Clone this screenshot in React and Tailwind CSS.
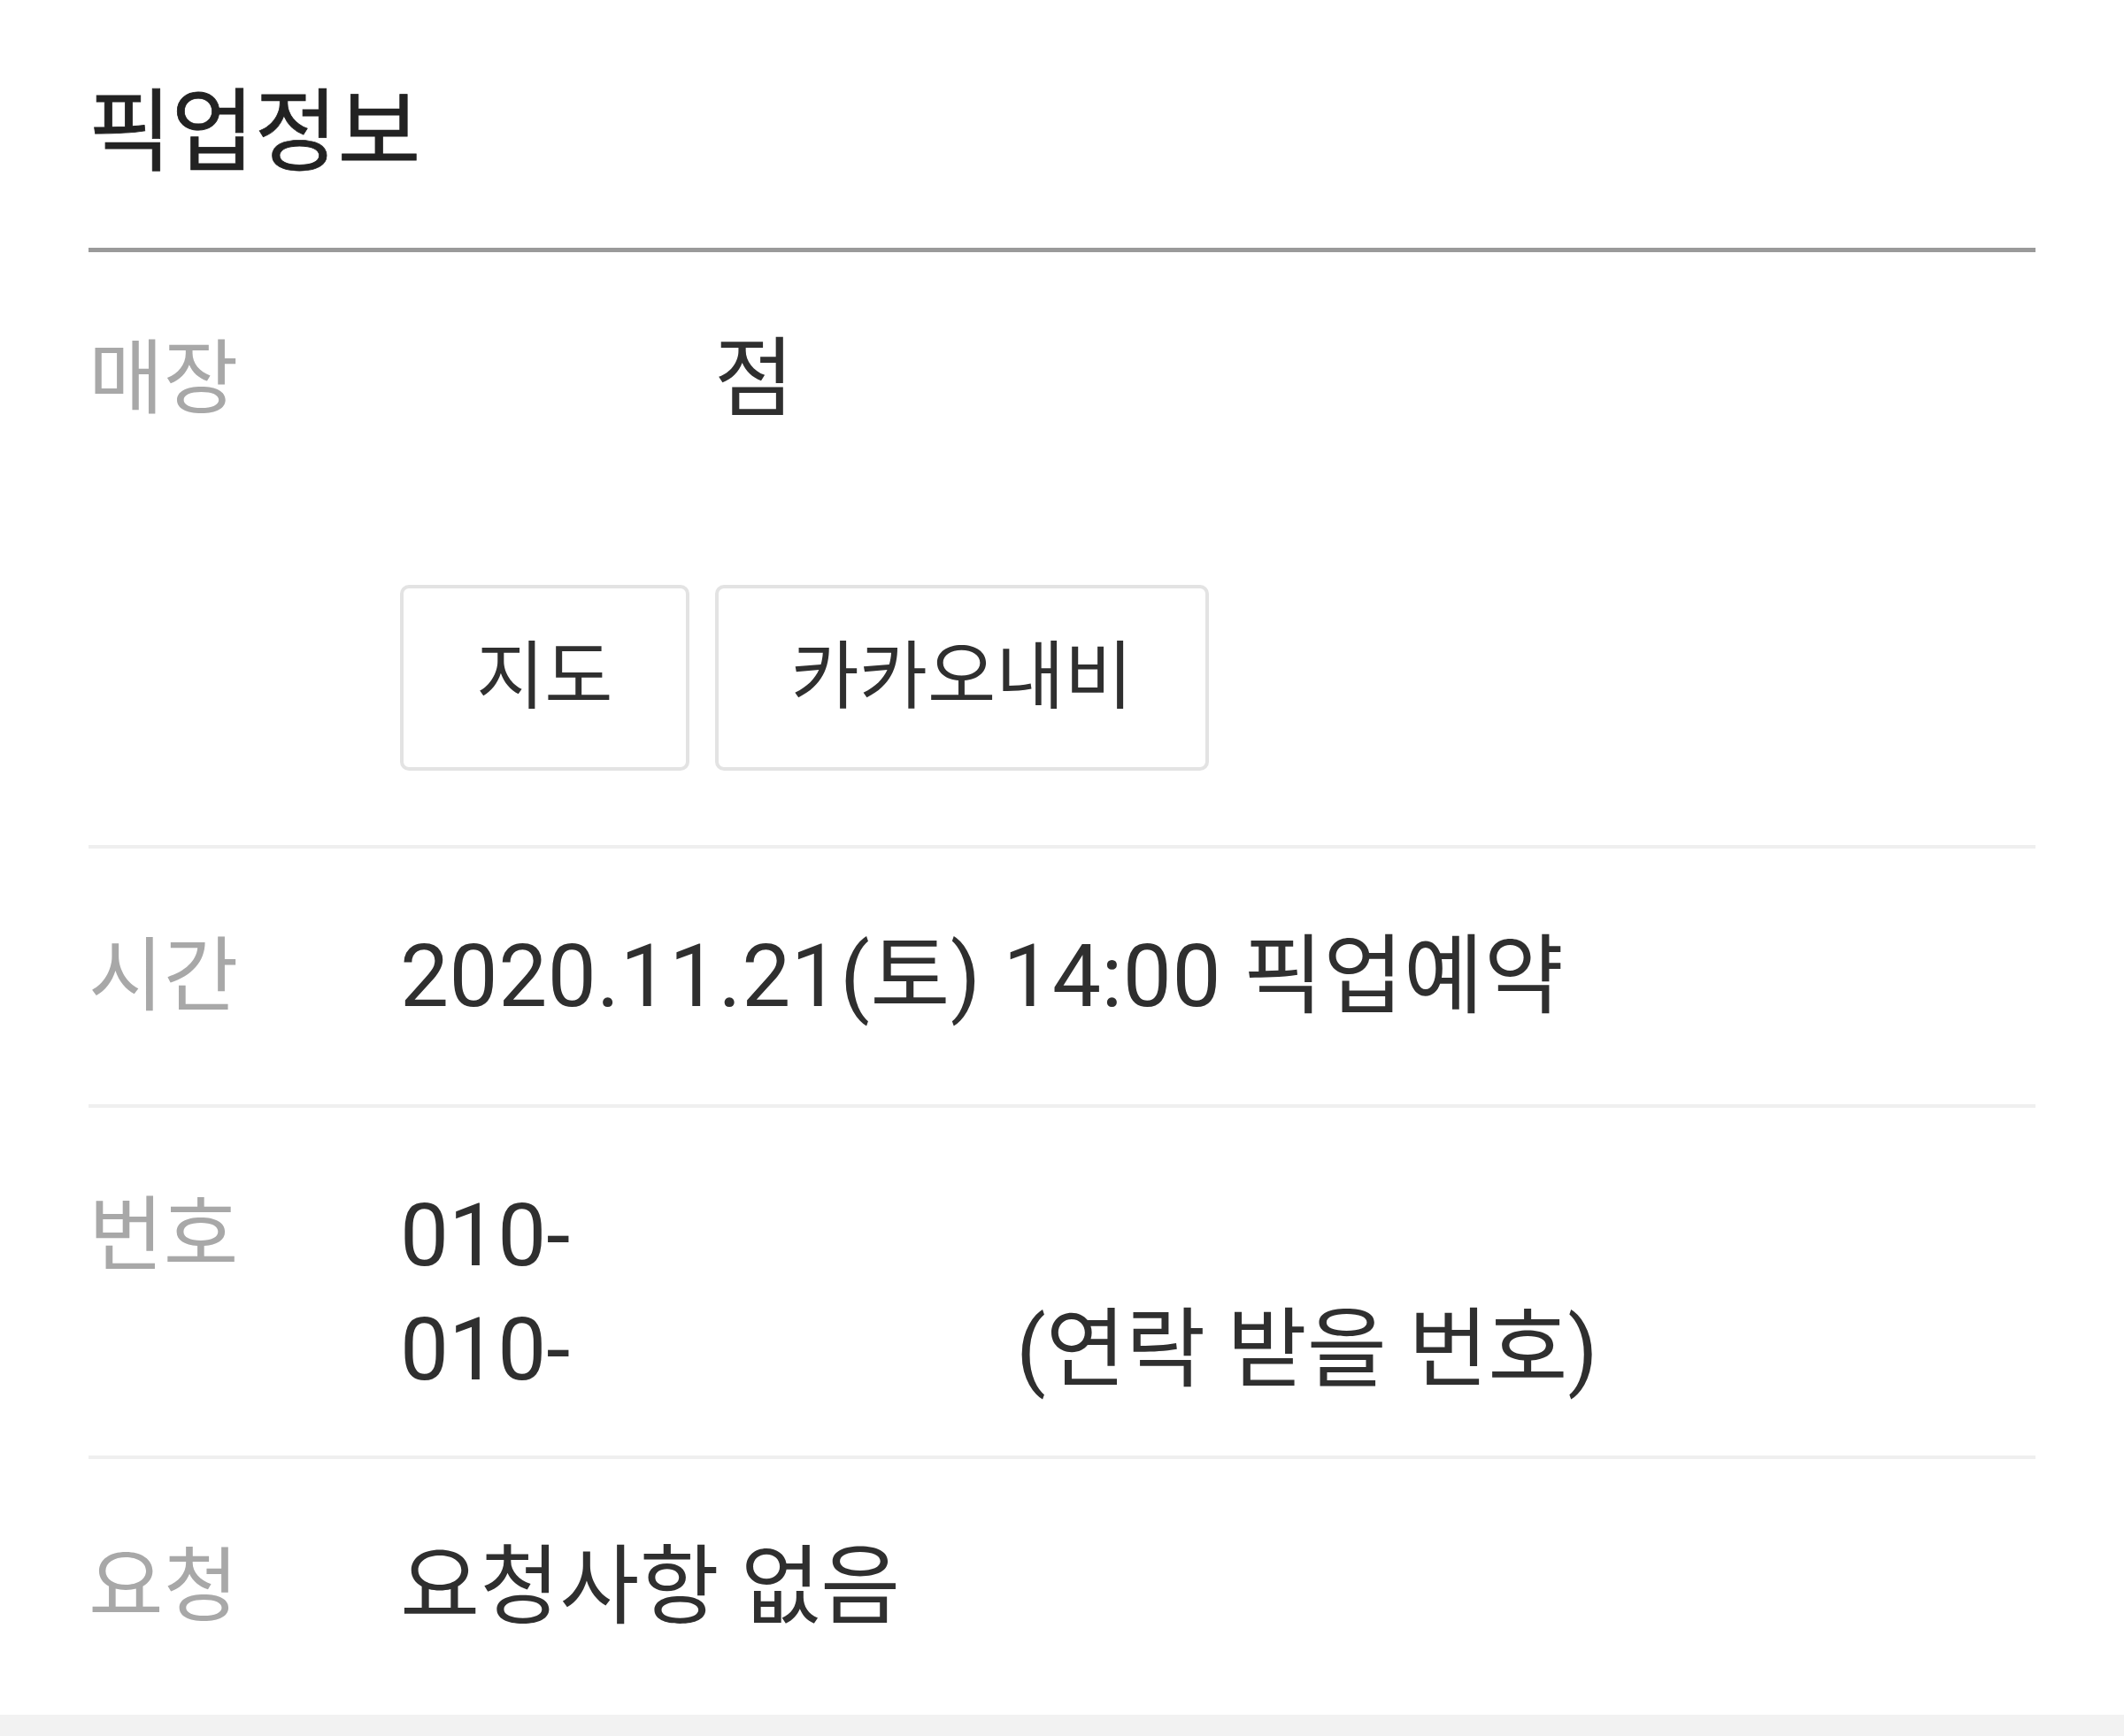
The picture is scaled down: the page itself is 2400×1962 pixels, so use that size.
export default function App() {
  const font = { fontFamily: "Roboto, 'Noto Sans CJK KR', sans-serif" };

  return (
    <div className="min-h-[1962px] w-[2400px] bg-[#f2f2f2]" style={font}>
      <div className="bg-white px-[100px] pb-0">
        <div className="pt-[85px] pb-[65px]">
          <h2 className="text-[102px] leading-[130px] font-normal text-[#222222] [-webkit-text-stroke:0.8px_#222222]">픽업정보</h2>
        </div>
        <div className="h-[5px] bg-[#9a9a9a]" />

        <div className="flex pt-[79px] pb-[84px]">
          <div className="w-[352px] text-[92px] leading-[129px] text-[#a8a8a8]">매장</div>
          <div className="flex-1">
            <div className="text-[98px] leading-[129px] text-[#2f2f2f]">
              <span className="inline-block w-[355px]" />
              점
            </div>
            <div className="mt-[168px] flex gap-[29px]">
              <button className="h-[210px] px-[82px] rounded-[10px] border-[4px] border-[#e3e3e3] bg-white text-[84px] text-[#2f2f2f]">
                지도
              </button>
              <button className="h-[210px] px-[82px] rounded-[10px] border-[4px] border-[#e3e3e3] bg-white text-[84px] text-[#2f2f2f]">
                카카오내비
              </button>
            </div>
          </div>
        </div>
        <div className="h-[4px] bg-[#efefef]" />

        <div className="flex py-[80px]">
          <div className="w-[352px] text-[92px] leading-[129px] text-[#a8a8a8]">시간</div>
          <div className="flex-1 text-[98px] leading-[129px] text-[#2f2f2f] tracking-[0.5px]">
            2020.11.21(토) 14:00 픽업예약
          </div>
        </div>
        <div className="h-[4px] bg-[#efefef]" />

        <div className="flex pt-[80px] pb-[55px]">
          <div className="w-[352px] text-[92px] leading-[129px] text-[#a8a8a8]">번호</div>
          <div className="flex-1 text-[98px] leading-[129px] text-[#2f2f2f]">
            <div>010-</div>
            <div>
              010-
              <span className="inline-block w-[504px]" />
              (연락 받을 번호)
            </div>
          </div>
        </div>
        <div className="h-[4px] bg-[#efefef]" />

        <div className="flex py-[80px]">
          <div className="w-[352px] text-[92px] leading-[129px] text-[#a8a8a8]">요청</div>
          <div className="flex-1 text-[98px] leading-[129px] text-[#2f2f2f]">요청사항 없음</div>
        </div>
      </div>
    </div>
  );
}
